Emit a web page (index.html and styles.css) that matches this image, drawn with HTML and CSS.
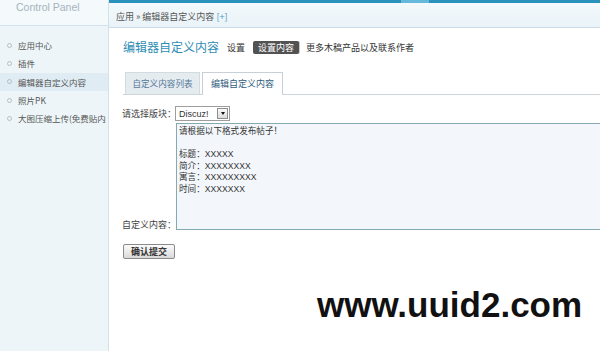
FILE: index.html
```html
<!DOCTYPE html>
<html lang="zh-CN">
<head>
<meta charset="utf-8">
<title>Control Panel</title>
<link rel="stylesheet" href="styles.css">
</head>
<body>
<div class="app">
  <aside class="side">
    <div class="side-head">Control Panel</div>
    <ul class="menu">
      <li>应用中心</li>
      <li>插件</li>
      <li class="on">编辑器自定义内容</li>
      <li>照片PK</li>
      <li>大图压缩上传(免费贴内</li>
    </ul>
  </aside>
  <main class="main">
    <div class="topline"><span class="topline-hi"></span></div>
    <div class="crumb">应用 » 编辑器自定义内容 <span class="plus">[+]</span></div>
    <div class="content">
      <div class="titlebar">
        <h1 class="title">编辑器自定义内容</h1>
        <span class="tlink">设置</span>
        <span class="tlink cur">设置内容</span>
        <span class="tlink">更多木稿产品以及联系作者</span>
      </div>
      <div class="tabs">
        <span class="tab t1">自定义内容列表</span>
        <span class="tab t2 active">编辑自定义内容</span>
      </div>
      <form class="form">
        <div class="row">
          <label class="lbl">请选择版块：</label>
          <span class="sel">
            <select><option>Discuz!</option></select>
            <span class="sel-btn"><i class="tri"></i></span>
          </span>
        </div>
        <div class="row row-ta">
          <label class="lbl lbl2">自定义内容：</label>
          <textarea class="ta">请根据以下格式发布帖子！

标题：XXXXX
简介：XXXXXXXX
寓言：XXXXXXXXX
时间：XXXXXXX</textarea>
        </div>
        <button type="button" class="btn">确认提交</button>
      </form>
    </div>
  </main>
</div>
<div class="watermark">www.uuid2.com</div>
</body>
</html>
```
FILE: styles.css
```css
html, body {
  margin: 0;
  padding: 0;
}
body {
  width: 600px;
  height: 351px;
  overflow: hidden;
  position: relative;
  background: #fff;
  font-family: "Noto Sans CJK SC", sans-serif;
  font-size: 9px;
  color: #444;
}
.app {
  display: flex;
  height: 351px;
}
.side {
  width: 108px;
  flex: none;
  background: #eef5f9;
  border-right: 1px solid #d3e2ea;
}
.side-head {
  height: 25px;
  background: #f4f9fb;
  border-bottom: 1px solid #d3e2ea;
  padding-left: 16px;
  font-family: "Liberation Sans", sans-serif;
  font-size: 10.5px;
  line-height: 14px;
  color: #a6b4bb;
}
.menu {
  list-style: none;
  margin: 0;
  padding: 10px 0 0;
}
.menu li {
  display: flex;
  align-items: center;
  height: 18.3px;
  padding-left: 7px;
  white-space: nowrap;
  overflow: hidden;
  color: #555;
  font-size: 8.5px;
}
.menu li::before {
  content: "";
  flex: none;
  width: 3px;
  height: 3px;
  border: 1px solid #b3bec4;
  border-radius: 50%;
  margin-right: 6px;
}
.menu li.on {
  background: #e0ecf4;
}
.main {
  flex: 1;
  min-width: 0;
  overflow: hidden;
}
.topline {
  height: 3px;
  background: #2a93bd;
  display: flex;
}
.topline-hi {
  width: 28px;
  margin-left: 292px;
  background: #67b9dc;
}
.crumb {
  height: 21px;
  padding-top: 3px;
  line-height: 21px;
  padding-left: 7px;
  background: linear-gradient(#f3f9fc, #e9f3f8);
  border-bottom: 1px solid #c9dde6;
  color: #555;
  white-space: nowrap;
}
.plus {
  color: #4a98bd;
}
.content {
  padding: 11px 0 0 14px;
}
.titlebar {
  display: flex;
  align-items: center;
  height: 16px;
  white-space: nowrap;
}
.title {
  margin: 0 8px 0 0;
  font-size: 12px;
  font-weight: normal;
  line-height: 16px;
  color: #2e8db4;
}
.tlink {
  color: #333;
  margin-right: 8px;
}
.tlink.cur {
  background: #525252;
  color: #fff;
  padding: 0 5px;
  line-height: 13px;
  border-radius: 2px;
  margin-right: 7px;
  box-shadow: 1px 0 0 #c8c8c8;
}
.tabs {
  display: flex;
  gap: 2px;
  margin-top: 17px;
  padding-left: 2px;
  border-bottom: 1px solid #cdd5da;
}
.tab {
  height: 21px;
  line-height: 21px;
  text-align: center;
  box-sizing: border-box;
  border: 1px solid #d2dbe0;
  border-bottom: none;
  white-space: nowrap;
}
.t1 {
  width: 75px;
  height: 22px;
  background: #e5ecf0;
  color: #55799a;
  font-size: 8.6px;
}
.t2 {
  width: 81px;
  height: 23px;
  margin-bottom: -1px;
  background: #fff;
  border-color: #c6d0d6;
  color: #2f5d7e;
  line-height: 22px;
}
.form {
  margin: 11px 0 0 -1px;
}
.row {
  display: flex;
  align-items: center;
}
.lbl {
  width: 53px;
  flex: none;
  white-space: nowrap;
  color: #444;
}
.sel {
  position: relative;
  width: 55px;
  height: 15px;
  display: block;
}
.sel select {
  appearance: none;
  -webkit-appearance: none;
  width: 100%;
  height: 100%;
  margin: 0;
  border: 1px solid #9d9d9d;
  border-radius: 0;
  background: #fff;
  font-family: "Liberation Sans", sans-serif;
  font-size: 9px;
  color: #333;
  padding: 0 0 0 3px;
}
.sel-btn {
  position: absolute;
  right: 2px;
  top: 2px;
  width: 9px;
  height: 9px;
  border: 1px solid #8e8e8e;
  background: linear-gradient(#fafafa, #dcdcdc);
  display: flex;
  align-items: center;
  justify-content: center;
  pointer-events: none;
}
.tri {
  width: 0;
  height: 0;
  border-left: 2.5px solid transparent;
  border-right: 2.5px solid transparent;
  border-top: 3px solid #111;
}
.row-ta {
  align-items: flex-end;
  margin-top: 2px;
}
.lbl2 {
  width: 54px;
  line-height: 10px;
}
.ta {
  flex: none;
  width: 440px;
  height: 107px;
  box-sizing: border-box;
  margin: 0;
  padding: 2px 2px;
  border: 1px solid #86a8b0;
  background: #f3f7fb;
  resize: none;
  font-family: "Liberation Sans", "Noto Sans CJK SC", sans-serif;
  font-size: 8.6px;
  line-height: 11.5px;
  color: #333;
  overflow: hidden;
}
.btn {
  display: block;
  margin: 14px 0 0 1px;
  width: 52px;
  height: 15px;
  padding: 0;
  border: 1px solid #8a8a8a;
  border-radius: 2px;
  background: linear-gradient(#fbfbfb, #d9d9d9);
  font-family: "Noto Sans CJK SC", sans-serif;
  font-size: 9px;
  font-weight: bold;
  line-height: 13px;
  color: #333;
}
.watermark {
  position: absolute;
  left: 317px;
  top: 287px;
  font-family: "Liberation Sans", sans-serif;
  font-weight: bold;
  font-size: 35px;
  line-height: 35px;
  color: #111;
  white-space: nowrap;
}
```
